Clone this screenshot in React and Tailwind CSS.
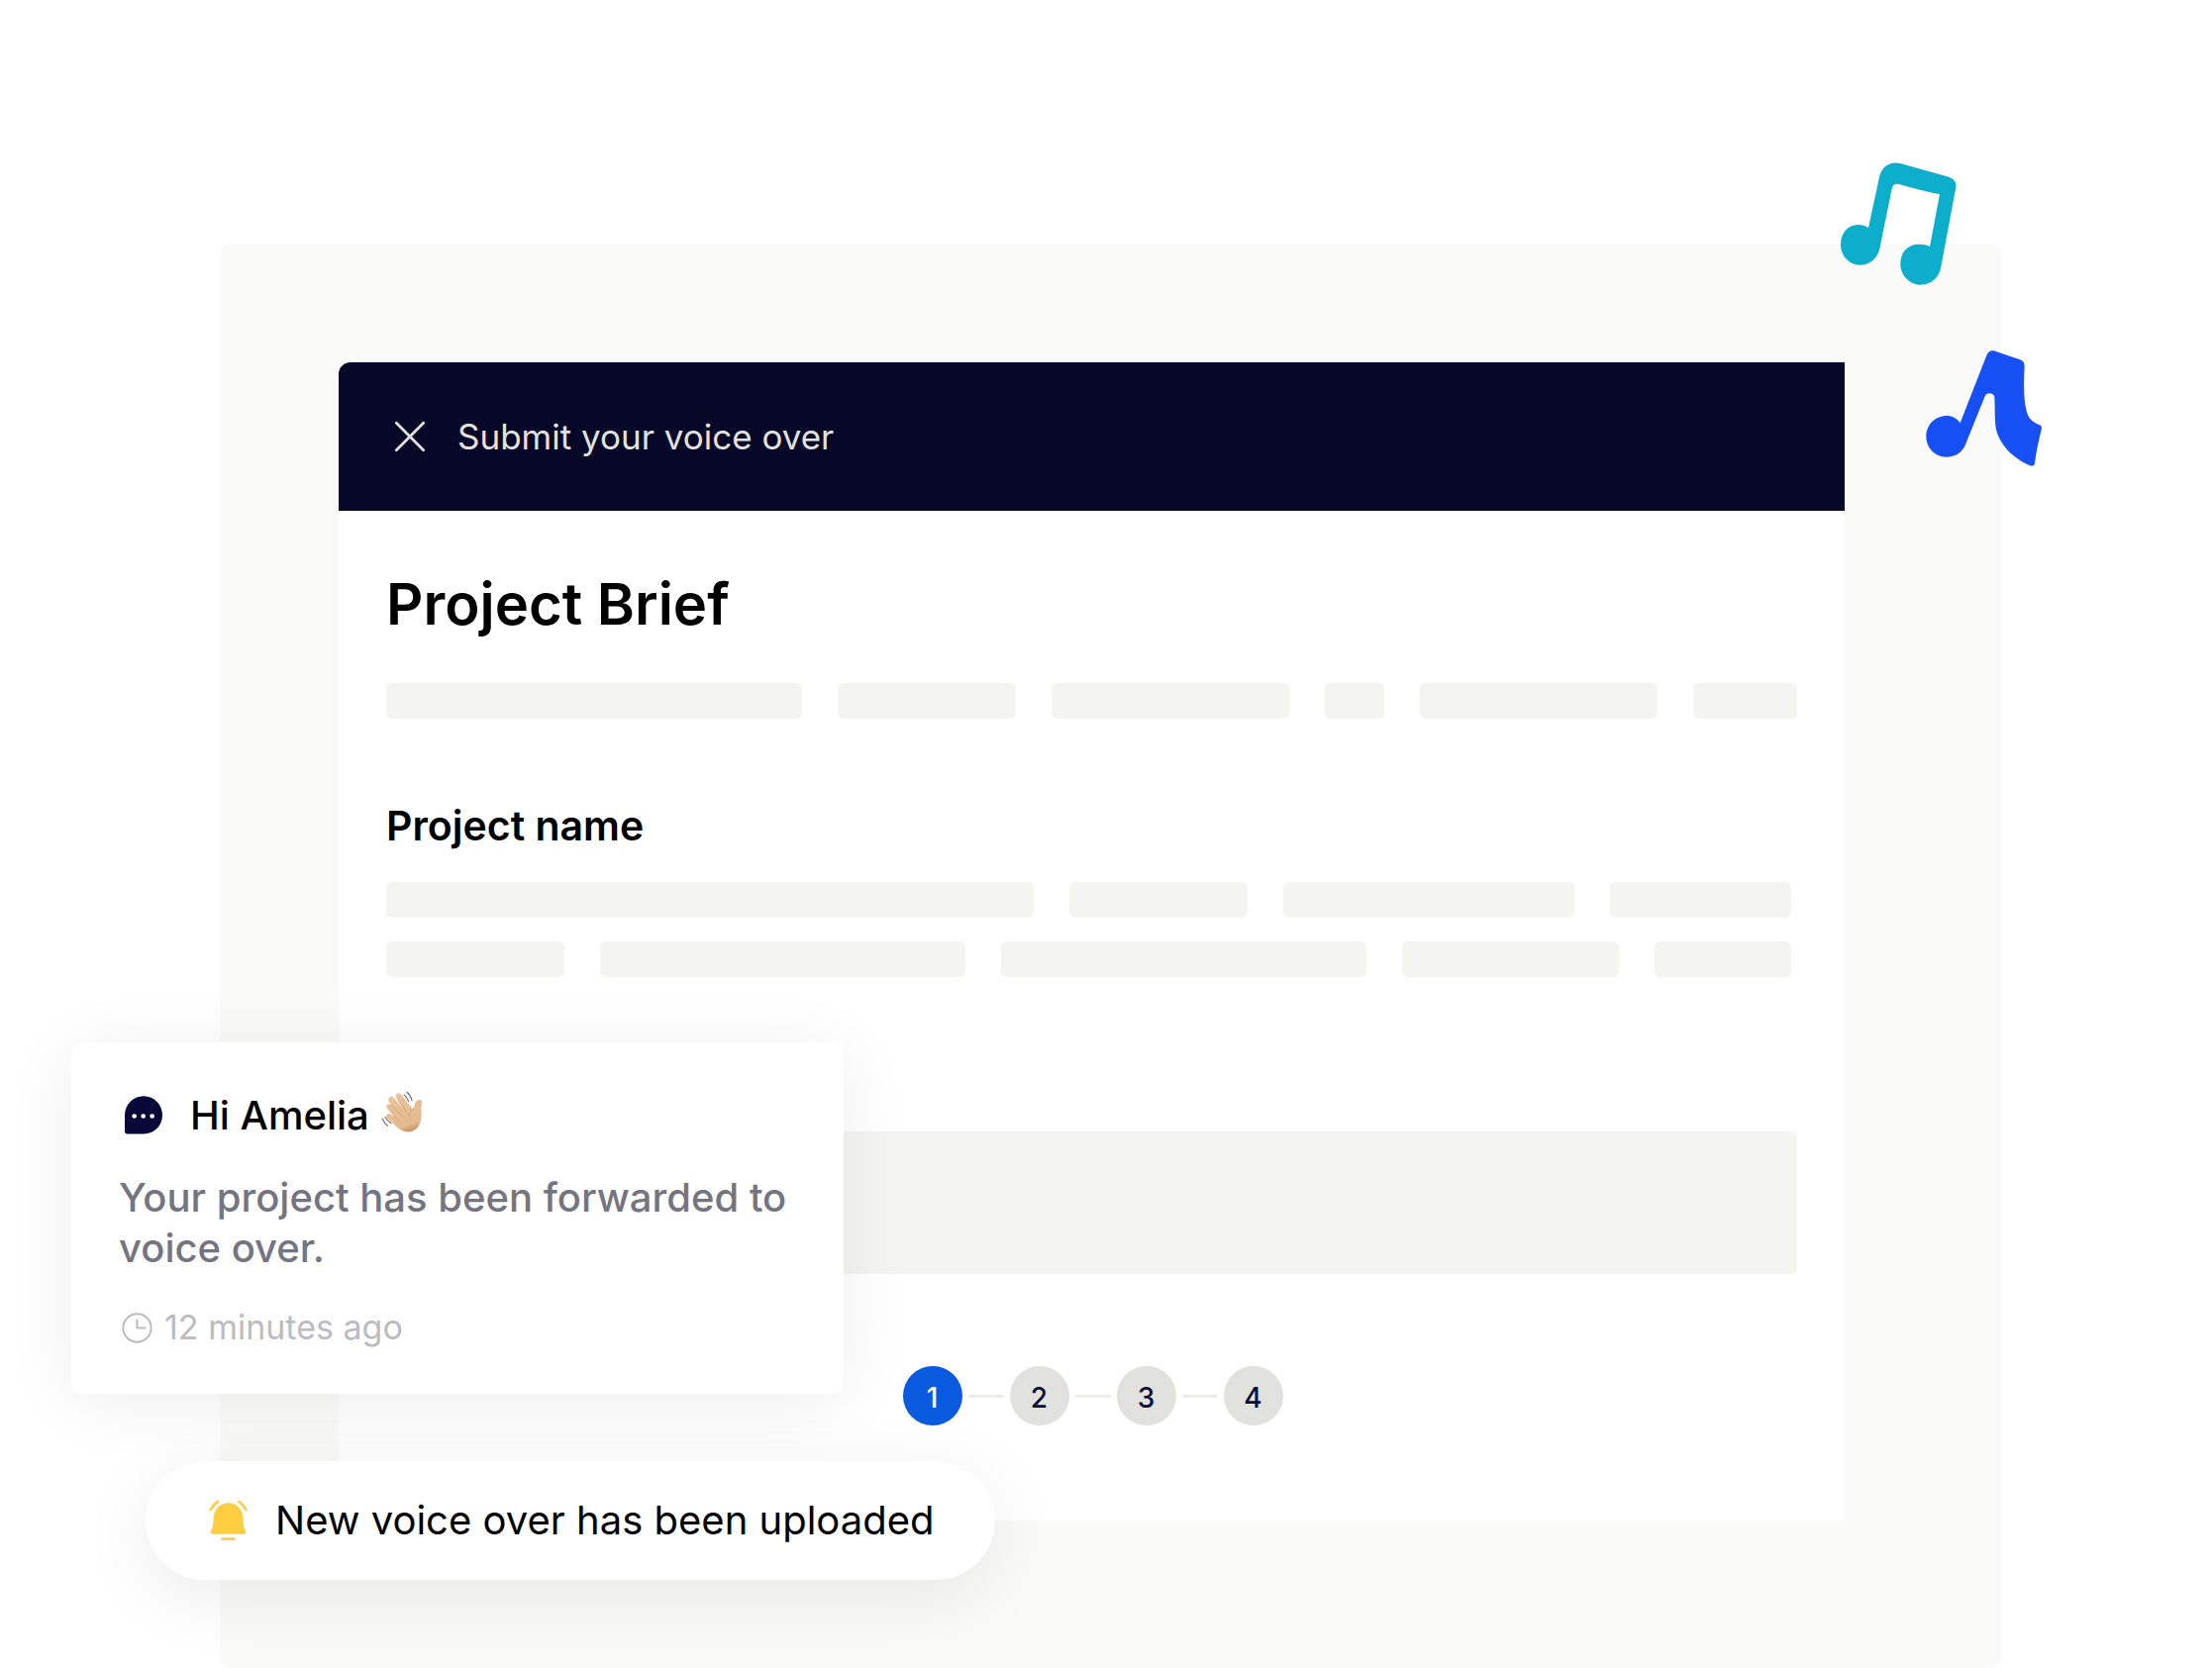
const introBars = ["grow-[420]", "grow-[180]", "grow-[240]", "grow-[60]", "grow-[240]", "grow-[105]"];
const nameBarsTop = ["grow-[654]", "grow-[180]", "grow-[294]", "grow-[183]"];
const nameBarsBottom = ["grow-[180]", "grow-[369]", "grow-[369]", "grow-[219]", "grow-[138]"];
const steps = [1, 2, 3, 4];

function BarRow({ bars }) {
  return (
    <div className="flex gap-9" aria-hidden="true">
      {bars.map((grow, i) => (
        <div key={i} className={`h-9 basis-0 rounded-md bg-[#f4f5f0] ${grow}`} />
      ))}
    </div>
  );
}

function CloseIcon() {
  return (
    <svg className="size-8" viewBox="0 0 32 32" fill="none" stroke="currentColor" strokeWidth="2.8" strokeLinecap="round" aria-hidden="true">
      <path d="M2.3 2.3 29.7 29.7M29.7 2.3 2.3 29.7" />
    </svg>
  );
}

function ChatIcon() {
  return (
    <svg className="h-[39px] w-[38px]" viewBox="48 44 114 116" aria-hidden="true">
      <path fill="#070738" d="M105 44c32 0 57 26 57 58s-25 57-57 57H56c-5 0-8-3-8-8v-49c0-32 25-58 57-58Z" />
      <g fill="#fff">
        <circle cx="77" cy="105" r="7" />
        <circle cx="104" cy="105" r="7" />
        <circle cx="131" cy="105" r="7" />
      </g>
    </svg>
  );
}

function ClockIcon() {
  return (
    <svg className="size-[31px]" viewBox="38 47 92 92" fill="none" stroke="currentColor" strokeWidth="6" strokeLinecap="round" strokeLinejoin="round" aria-hidden="true">
      <circle cx="84" cy="93" r="42" />
      <path d="M84 69v24h24" />
    </svg>
  );
}

function BellIcon() {
  return (
    <svg className="h-[42px] w-[39px]" viewBox="35 28 117 126" aria-hidden="true">
      <path
        fill="#ffcd40"
        d="M94 38c25 0 42 18 44 44 1 16 1 28 6 36 5 9 3 14-4 14H47c-7 0-9-5-4-14 5-8 5-20 6-36 2-26 20-44 45-44Z"
      />
      <path fill="none" stroke="#ffcd40" strokeWidth="8" strokeLinecap="round" d="M40 58c5-10 12-18 22-24M126 34c9 6 16 14 21 24M75 147h37" />
    </svg>
  );
}

function WavingHand() {
  return (
    <svg className="h-[43px] w-[42px]" viewBox="129 60 127 128" fill="none" strokeLinecap="round" role="img" aria-label="Waving hand">
      <defs>
        <linearGradient id="skin" gradientUnits="userSpaceOnUse" x1="180" y1="80" x2="218" y2="187">
          <stop offset="0" stopColor="#e8c299" />
          <stop offset="0.8" stopColor="#e5ba91" />
          <stop offset="1" stopColor="#cb8d60" />
        </linearGradient>
      </defs>
      <path
        fill="url(#skin)"
        d="M175 80c-4-9 8-16 14-8l34 42c3 4 7 2 7-3 1-11 3-17 11-21 7-3 15 2 13 9-6 16 0 28-3 47-3 23-18 41-38 41-19 0-31-8-44-22l-22-20c-7-7 2-18 10-12l10 7-20-24c-7-9 5-19 13-11l-7-10c-7-10 7-21 15-12l25 29Z"
      />
      <path stroke="#cf9c6c" strokeWidth="2.5" d="M177 83l27 40M161 106l32 31M168 141l17 14" />
      <path stroke="#c08c5e" strokeWidth="1.8" d="M230 112c-4 9-14 14-16 26" />
      <path stroke="#6f6f6f" strokeWidth="3.5" d="M199 74c7 5 11 12 14 20M207 66c8 6 13 15 16 25M141 142c5 8 11 14 18 18M132 147c4 9 10 17 17 22" />
    </svg>
  );
}

function DoubleNote() {
  return (
    <svg className="absolute -top-[82px] right-[46px] h-[124px] w-[117px]" viewBox="88 72 351 372" aria-hidden="true">
      <path
        fill="#0daecb"
        d="M205 117C212 84 239 67 271 76L415 116C431 121 439 131 437 148L392 388C387 421 362 443 331 443C297 443 269 414 269 380C269 343 292 320 325 320C338 320 349 322 358 327L388 169C345 161 303 149 264 138C253 136 245 142 243 152L208 324C204 358 179 383 147 383C113 383 88 355 88 321C88 286 110 261 141 261C153 261 163 264 172 270Z"
      />
    </svg>
  );
}

function BentNote() {
  return (
    <svg className="absolute top-[108px] -right-10 size-[117px]" viewBox="345 642 351 351" aria-hidden="true">
      <path
        fill="#1650f4"
        d="M530 655C534 645 544 640 555 644L630 670C640 674 644 679 644 690C641 750 642 790 648 817C654 848 664 857 690 868C695 871 697 875 695 882C686 920 679 950 675 985C673 992 667 994 660 991C605 968 562 920 556 870C553 840 555 810 553 783C550 769 529 768 524 781L466 925C458 948 438 965 408 965C373 965 346 937 346 903C346 868 373 840 408 840C425 840 440 848 449 862Z"
      />
    </svg>
  );
}

function Stepper() {
  return (
    <ol className="mt-[93px] flex items-center justify-center gap-1.5 pl-0.5">
      {steps.map((n) => (
        <li key={n} className="flex items-center gap-1.5">
          {n > 1 && <span className="h-[3px] w-9 rounded-full bg-[#ecede9]" />}
          <button
            type="button"
            aria-current={n === 1 ? "step" : undefined}
            className={`size-[60px] rounded-full pt-1 text-[28px] font-medium ${
              n === 1 ? "bg-[#0a5ae0] text-white" : "bg-[#e1e2dd] text-[#0a0a3a]"
            }`}
          >
            {n}
          </button>
        </li>
      ))}
    </ol>
  );
}

function MessageCard() {
  return (
    <article className="absolute top-[807px] -left-[150px] w-[780px] rounded-xl bg-white pt-12 pr-8 pb-[46px] pl-12 shadow-[0_8px_72px_rgba(0,0,0,0.07)]">
      <header className="flex items-center pl-1.5">
        <ChatIcon />
        <h2 className="ml-7 text-[40px] leading-12 font-medium">Hi Amelia</h2>
        <span className="ml-3 pb-2">
          <WavingHand />
        </span>
      </header>
      <p className="mt-8 text-[40px] leading-[51px] font-medium text-[#757582]">Your project has been forwarded to voice over.</p>
      <p className="mt-[34px] flex items-center gap-3 pl-[3px] text-[34px] leading-[42px] text-[#bbbbc1]">
        <ClockIcon />
        <time>12 minutes ago</time>
      </p>
    </article>
  );
}

function Toast() {
  return (
    <div
      role="status"
      className="absolute top-[1230px] -left-[75px] flex h-[120px] items-center gap-7 rounded-full bg-white pr-[61px] pl-16 text-[40px] whitespace-nowrap shadow-[0_16px_72px_rgba(0,0,0,0.08)]"
    >
      <BellIcon />
      <span>New voice over has been uploaded</span>
    </div>
  );
}

export default function App() {
  return (
    <main className="overflow-hidden bg-white pt-[246px] pr-[212px] pl-[222px] font-['Inter',sans-serif] text-black">
      <div className="relative rounded-xl bg-[#fafaf8] pt-[120px] pr-[159px] pb-[149px] pl-[120px]">
        <section className="rounded-tl-xl bg-white">
          <header className="flex h-[150px] items-center gap-8 rounded-tl-xl bg-[#070728] pl-14 text-[35px] text-[#e1e2dd]">
            <button type="button" aria-label="Close">
              <CloseIcon />
            </button>
            <span>Submit your voice over</span>
          </header>
          <div className="px-12 pt-[58px] pb-24">
            <h1 className="text-[58px] leading-[72px] font-semibold">Project Brief</h1>
            <div className="mt-11">
              <BarRow bars={introBars} />
            </div>
            <h2 className="mt-[84px] text-[41px] leading-12 font-semibold">Project name</h2>
            <div className="mt-[33px] flex flex-col gap-6 pr-1.5">
              <BarRow bars={nameBarsTop} />
              <BarRow bars={nameBarsBottom} />
            </div>
            <div className="mt-[156px] h-36 rounded-md bg-[#f4f5f0]" />
            <Stepper />
          </div>
        </section>
        <DoubleNote />
        <BentNote />
        <MessageCard />
        <Toast />
      </div>
    </main>
  );
}
